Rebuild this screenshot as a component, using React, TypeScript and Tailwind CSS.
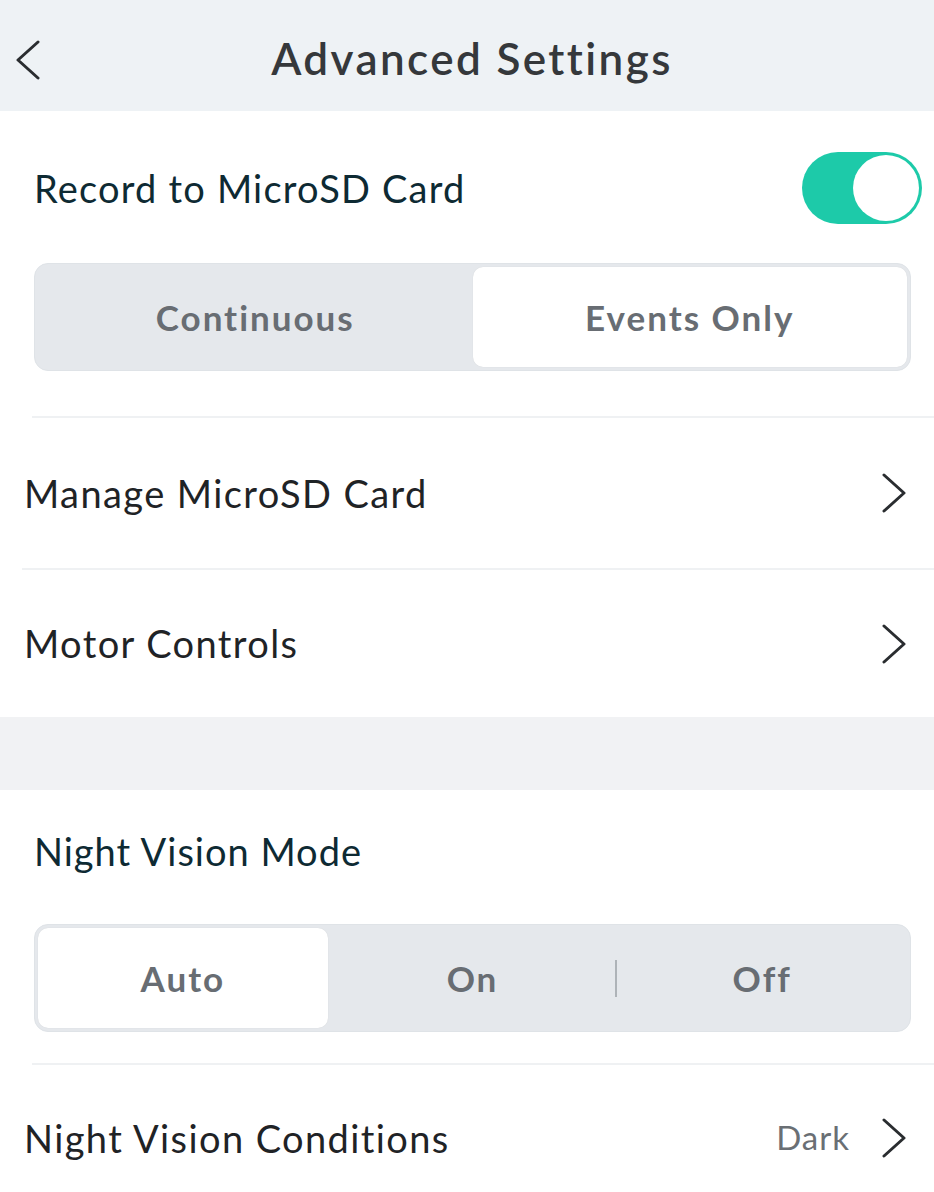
import { useState } from 'react';

function Chevron({ dir = 'right', className = '' }: { dir?: 'left' | 'right'; className?: string }) {
    const points = dir === 'right' ? '2,2 22,20 2,38' : '22,2 2,20 22,38';
    return (
        <svg width="24" height="40" viewBox="0 0 24 40" className={className}>
            <polyline points={points} fill="none" stroke="currentColor" strokeWidth="3" strokeLinecap="round" strokeLinejoin="round" />
        </svg>
    );
}

function Segmented({ options, value, onChange, dividers = [] }: {
    options: string[];
    value: number;
    onChange: (i: number) => void;
    dividers?: number[];
}) {
    return (
        <div className="ml-[34px] mr-[23px] h-[108px] rounded-[14px] bg-[#e5e8ec] p-[3px] flex border border-[#dfe3e7]">
            {options.map((opt, i) => (
                <div key={opt} className="flex-1 flex items-center relative">
                    <button
                        onClick={() => onChange(i)}
                        className={
                            'w-full h-full rounded-[10px] text-[35px] font-bold tracking-[2px] text-[#686d73] ' +
                            (value === i ? 'bg-white shadow-[0_0_1px_rgba(0,0,0,0.12)]' : '')
                        }
                    >
                        {opt}
                    </button>
                    {dividers.includes(i) && (
                        <div className="absolute right-0 top-[32px] w-[2px] h-[37px] bg-[#aeb3b8]" />
                    )}
                </div>
            ))}
        </div>
    );
}

function LinkRow({ label, value }: { label: string; value?: string }) {
    return (
        <div className="h-full flex items-center justify-between pl-[24px] pr-[28px]">
            <span className="text-[38px] tracking-[1.4px] text-[#1f2326]">{label}</span>
            <div className="flex items-center gap-[32px]">
                {value && <span className="text-[33px] tracking-[1px] text-[#6a6f74]">{value}</span>}
                <Chevron className="text-[#2a2d30]" />
            </div>
        </div>
    );
}

export default function App() {
    const [recording, setRecording] = useState(true);
    const [recordMode, setRecordMode] = useState(1);
    const [nightMode, setNightMode] = useState(0);

    return (
        <div className="w-[934px] h-[1192px] overflow-hidden bg-white font-['Lato',sans-serif]">
            {/* header */}
            <div className="h-[111px] bg-[#eef2f5] relative flex items-center justify-center pl-[10px] pt-[4px]">
                <button className="absolute left-[16px] top-[40px] text-[#2a2d30]">
                    <Chevron dir="left" />
                </button>
                <h1 className="text-[44px] font-semibold text-[#35383b] tracking-[2.4px]">Advanced Settings</h1>
            </div>

            {/* record */}
            <div className="mt-[41px] h-[72px] flex items-center justify-between pl-[34px] pr-[12px]">
                <span className="text-[38px] tracking-[1.2px] text-[#0e2a33]">Record to MicroSD Card</span>
                <button
                    onClick={() => setRecording(!recording)}
                    className={
                        'w-[120px] h-[72px] rounded-full flex items-center p-[3px] ' +
                        (recording ? 'bg-[#1dcaa9] justify-end' : 'bg-[#d9dde1] justify-start')
                    }
                >
                    <span className="w-[66px] h-[66px] rounded-full bg-white" />
                </button>
            </div>

            <div className="mt-[39px]">
                <Segmented options={['Continuous', 'Events Only']} value={recordMode} onChange={setRecordMode} />
            </div>

            <div className="mt-[45px] ml-[32px] h-[2px] bg-[#eff1f3]" />
            <div className="h-[150px]">
                <LinkRow label="Manage MicroSD Card" />
            </div>
            <div className="ml-[22px] h-[2px] bg-[#eff1f3]" />
            <div className="h-[147px]">
                <LinkRow label="Motor Controls" />
            </div>

            <div className="h-[73px] bg-[#f1f2f4]" />

            {/* night vision */}
            <div className="h-[122px] flex items-center pl-[34px]">
                <span className="text-[38px] tracking-[1px] text-[#0e2a33]">Night Vision Mode</span>
            </div>
            <div className="mt-[12px]">
                <Segmented options={['Auto', 'On', 'Off']} value={nightMode} onChange={setNightMode} dividers={[1]} />
            </div>

            <div className="mt-[31px] ml-[32px] h-[2px] bg-[#eff1f3]" />
            <div className="h-[146px]">
                <LinkRow label="Night Vision Conditions" value="Dark" />
            </div>
        </div>
    );
}
